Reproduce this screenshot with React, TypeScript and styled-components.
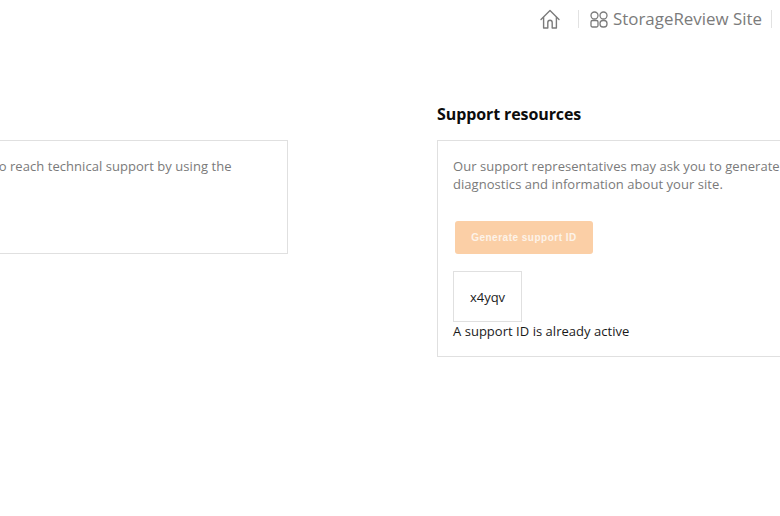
import React from 'react';
import styled, { createGlobalStyle } from 'styled-components';

const GlobalStyle = createGlobalStyle`
  html, body {
    margin: 0;
    padding: 0;
    background: #fff;
    overflow: hidden;
  }
  body {
    font-family: 'Open Sans', 'Liberation Sans', sans-serif;
  }
`;

const Page = styled.div`
  width: 780px;
  height: 516px;
  overflow: hidden;
`;

const TopBar = styled.header`
  height: 38px;
  display: flex;
  align-items: center;
  justify-content: flex-end;
  padding-right: 8px;
`;

const HomeLink = styled.a`
  display: flex;
  color: #7b7b7b;
  margin-right: 17px;
`;

const SiteLink = styled.a`
  display: flex;
  align-items: center;
  gap: 5px;
  height: 18px;
  padding: 0 9px 0 11px;
  border-left: 1px solid #e2e2e2;
  border-right: 1px solid #e2e2e2;
  color: #7b7b7b;
  font-size: 16.9px;
  line-height: 18px;
  white-space: nowrap;
`;

const Columns = styled.main`
  display: flex;
  align-items: flex-start;
  margin-top: 66px;
  margin-left: -22px;
`;

const Column = styled.section<{ $width: number; $gap?: number }>`
  flex: none;
  width: ${props => props.$width}px;
  margin-right: ${props => props.$gap || 0}px;
`;

const Heading = styled.h2`
  margin: 0 0 16px;
  height: 20px;
  font-size: 16px;
  line-height: 20px;
  font-weight: 700;
  letter-spacing: -0.1px;
  color: #0c0c0c;
`;

const Card = styled.div<{ $height: number }>`
  box-sizing: border-box;
  height: ${props => props.$height}px;
  padding: 16px 15px;
  background: #fff;
  border: 1px solid #e0e0e0;
`;

const Copy = styled.p`
  margin: 0;
  font-size: 13px;
  line-height: 18px;
  letter-spacing: 0.05px;
  color: #7a7a7a;
  white-space: nowrap;
`;

const GenerateButton = styled.button`
  display: block;
  width: 138px;
  height: 33px;
  margin: 28px 0 17px 2px;
  padding: 0;
  border: none;
  border-radius: 3px;
  background: #fbcfa6;
  color: #fdf3e9;
  font-family: 'Liberation Sans', Arial, sans-serif;
  font-size: 10px;
  font-weight: 700;
  letter-spacing: 0.5px;
`;

const CodeBox = styled.div`
  box-sizing: border-box;
  width: 69px;
  height: 51px;
  display: flex;
  align-items: center;
  justify-content: center;
  border: 1px solid #e0e0e0;
  font-size: 13px;
  color: #1a1a1a;
`;

const ActiveNote = styled.div`
  font-size: 13px;
  line-height: 18px;
  letter-spacing: 0.03px;
  color: #1a1a1a;
`;

const HomeIcon = () => (
  <svg width="22" height="22" viewBox="0 0 22 22" fill="none" stroke="currentColor" strokeWidth="1.4" strokeLinecap="round" strokeLinejoin="round">
    <path d="M2 11.5 11 2.5l9 9" />
    <path d="M4.6 9.5V20h4.2v-5.6a2.2 2.2 0 0 1 4.4 0V20h4.2V9.5" />
  </svg>
);

const SitesIcon = () => (
  <svg width="18" height="17" viewBox="0 0 18 17" fill="none" stroke="currentColor" strokeWidth="1.3">
    <rect x="1" y="1" width="7" height="7" rx="3.5" />
    <rect x="10" y="1" width="7" height="7" rx="3.5" />
    <rect x="1" y="9.5" width="7" height="6.5" rx="1.5" />
    <rect x="10" y="9.5" width="7" height="6.5" rx="3" />
  </svg>
);

const App: React.FC = () => {
  return (
    <Page>
      <GlobalStyle />
      <TopBar>
        <HomeLink><HomeIcon /></HomeLink>
        <SiteLink><SitesIcon />StorageReview Site</SiteLink>
      </TopBar>
      <Columns>
        <Column $width={310} $gap={149}>
          <Heading>&nbsp;</Heading>
          <Card $height={114}>
            <Copy>to reach technical support by using the</Copy>
          </Card>
        </Column>
        <Column $width={400}>
          <Heading>Support resources</Heading>
          <Card $height={217}>
            <Copy>Our support representatives may ask you to generate<br />diagnostics and information about your site.</Copy>
            <GenerateButton disabled>Generate support ID</GenerateButton>
            <CodeBox>x4yqv</CodeBox>
            <ActiveNote>A support ID is already active</ActiveNote>
          </Card>
        </Column>
      </Columns>
    </Page>
  );
};

export default App;
